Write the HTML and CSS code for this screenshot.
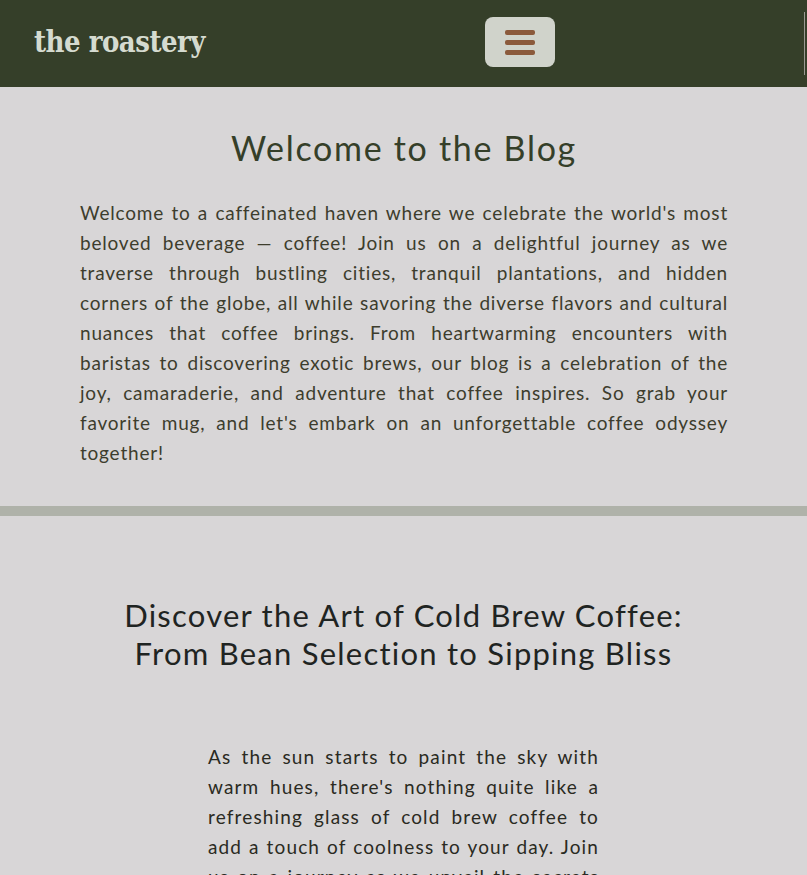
FILE: index.html
```html
<!DOCTYPE html>
<html lang="en">
<head>
<meta charset="utf-8">
<title>the roastery</title>
<link rel="stylesheet" href="styles.css">
</head>
<body>
<header class="site-header">
  <a class="logo" href="#">the roastery</a>
  <button class="menu-btn" aria-label="Menu">
    <span class="bar"></span><span class="bar"></span><span class="bar"></span>
  </button>
  <span class="edge-line"></span>
</header>
<main>
  <section class="intro">
    <h1 class="intro-title">Welcome to the Blog</h1>
    <p class="intro-text">Welcome to a caffeinated haven where we celebrate the world's most beloved beverage — coffee! Join us on a delightful journey as we traverse through bustling cities, tranquil plantations, and hidden corners of the globe, all while savoring the diverse flavors and cultural nuances that coffee brings. From heartwarming encounters with baristas to discovering exotic brews, our blog is a celebration of the joy, camaraderie, and adventure that coffee inspires. So grab your favorite mug, and let's embark on an unforgettable coffee odyssey together!</p>
  </section>
  <hr class="divider">
  <article class="post">
    <h2 class="post-title">Discover the Art of Cold Brew Coffee: From Bean Selection to Sipping Bliss</h2>
    <p class="post-text">As the sun starts to paint the sky with warm hues, there's nothing quite like a refreshing glass of cold brew coffee to add a touch of coolness to your day. Join us on a journey as we unveil the secrets of crafting the perfect cold brew at home, from choosing the right beans to savoring every smooth sip.</p>
  </article>
</main>
</body>
</html>
```
FILE: styles.css
```css
html, body {
  margin: 0;
  padding: 0;
}
body {
  background: #d8d6d7;
  font-family: "Lato", "Open Sans", sans-serif;
  letter-spacing: 0.05em;
  overflow: hidden;
}
.site-header {
  height: 87px;
  background: #353f29;
  display: flex;
  align-items: center;
  padding: 0 34px;
  position: relative;
  letter-spacing: 0;
}
.logo {
  font-family: "DejaVu Serif", serif;
  font-weight: 700;
  font-stretch: condensed;
  font-size: 29px;
  color: #d5dbd0;
  text-decoration: none;
  letter-spacing: -0.5px;
  width: 451px;
  margin-top: -3px;
}
.menu-btn {
  width: 70px;
  height: 50px;
  border: none;
  border-radius: 8px;
  background: #d0d3cb;
  display: flex;
  flex-direction: column;
  align-items: center;
  justify-content: center;
  gap: 5px;
  padding: 0;
  margin-top: -3px;
}
.bar {
  display: block;
  width: 30px;
  height: 5px;
  border-radius: 2px;
  background: #8b5a3c;
}
.edge-line {
  position: absolute;
  right: 2px;
  top: 12px;
  width: 1px;
  height: 63px;
  background: #9a9a92;
}
.intro {
  padding: 40px 79px 38px 80px;
}
.intro-title {
  margin: 0 0 29px;
  text-align: center;
  font-weight: 400;
  font-size: 34px;
  line-height: 42px;
  letter-spacing: 0.05em;
  color: #353f29;
}
.intro-text {
  margin: 0;
  text-align: justify;
  font-size: 19px;
  line-height: 30px;
  color: #3d3d2d;
}
.divider {
  margin: 0;
  border: none;
  height: 10px;
  background: #afb2a9;
}
.post {
  padding: 80px 0 0;
}
.post-title {
  margin: 0 auto 70px;
  width: 620px;
  text-align: center;
  font-weight: 400;
  font-size: 31px;
  line-height: 38px;
  letter-spacing: 0.04em;
  color: #1f2422;
}
.post-text {
  margin: 0 auto;
  width: 391px;
  text-align: justify;
  font-size: 19px;
  line-height: 30px;
  letter-spacing: 0.06em;
  color: #2a2a22;
}
```
